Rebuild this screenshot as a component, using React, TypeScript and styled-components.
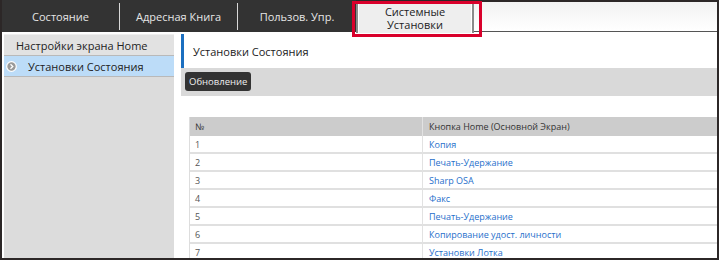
import React from "react";
import styled, { createGlobalStyle } from "styled-components";

const Global = createGlobalStyle`
  html, body { margin: 0; padding: 0; background: #fff; }
  body { font-family: "Open Sans", "Noto Sans", sans-serif; }
  * { box-sizing: border-box; }
`;

const Frame = styled.div`
  width: 719px;
  height: 260px;
  border: 2px solid #2c2727;
  border-top-width: 0;
  display: flex;
  flex-direction: column;
  overflow: hidden;
  position: relative;
`;

const Nav = styled.div`
  display: flex;
  flex-shrink: 0;
  height: 32px;
  background: linear-gradient(#f2f2f2, #fff);
  border-top: 2px solid #2c2727;
  border-bottom: 1px solid #555;
`;

const DarkTabs = styled.div`
  display: flex;
  background: #333;
  margin-top: -2px;
  height: 32px;
`;

const Tab = styled.div<{ $sep?: boolean }>`
  width: 118px;
  display: flex;
  align-items: center;
  justify-content: center;
  color: #e6e6e6;
  font-size: 11px;
  border-right: ${(p) => (p.$sep ? "1px solid #d8d8d8" : "none")};
  margin: 3px 0 2px;
  height: 27px;
`;

const ActiveTab = styled.div`
  width: 118px;
  height: 29px;
  margin-top: 2px;
  background: #eeeeee;
  border-left: 2px solid #8a8a8a;
  border-right: 2px solid #8a8a8a;
  box-shadow: inset 1px 0 0 #fff, inset -1px 0 0 #fff;
  color: #222;
  font-size: 11px;
  text-align: center;
  display: flex;
  flex-direction: column;
  align-items: center;
  justify-content: center;
  position: relative;
  z-index: 1;
`;

const TabLine = styled.span`
  display: block;
  line-height: 12.5px;
`;

const Highlight = styled.div`
  position: absolute;
  left: 350px;
  top: 1px;
  width: 130px;
  height: 36px;
  border: 3px solid #d9002b;
  z-index: 2;
  pointer-events: none;
`;

const Body = styled.div`
  flex: 1;
  display: flex;
  gap: 7px;
  padding: 2px 0 0 2px;
  min-height: 0;
`;

const Sidebar = styled.div`
  width: 170px;
  flex-shrink: 0;
  background: #dcdcdc;
  display: flex;
  flex-direction: column;
`;

const SideItem = styled.div<{ $active?: boolean }>`
  height: ${(p) => (p.$active ? "21px" : "22px")};
  display: flex;
  align-items: center;
  gap: 11px;
  padding-left: ${(p) => (p.$active ? "2px" : "12px")};
  font-size: 11px;
  color: #222;
  background: ${(p) => (p.$active ? "#bcdcf8" : "#e2e2e2")};
  border-top: ${(p) => (p.$active ? "none" : "1px solid #efefef")};
  border-bottom: 1px solid #b9b9b9;
`;

const Main = styled.div`
  flex: 1;
  display: flex;
  flex-direction: column;
  min-width: 0;
`;

const Title = styled.div`
  height: 34px;
  flex-shrink: 0;
  border-left: 3px solid #1b6fc0;
  padding-left: 9px;
  display: flex;
  align-items: center;
  font-size: 11px;
  color: #222;
`;

const Toolbar = styled.div`
  height: 28px;
  flex-shrink: 0;
  background: #d9d9d9;
  padding: 4px 0 0 4px;
  display: flex;
  align-items: flex-start;
`;

const Button = styled.div`
  height: 19px;
  padding: 0 4px;
  background: #333;
  color: #eee;
  border-radius: 3px;
  font-size: 9.5px;
  display: flex;
  align-items: center;
`;

const Table = styled.div`
  margin: 21px 0 0 8px;
  display: grid;
  grid-template-columns: 232px 1fr;
  border-left: 1px solid #ddd;
  font-size: 9px;
`;

const HeadCell = styled.div<{ $first?: boolean }>`
  height: 19px;
  background: #cccccc;
  color: #333;
  display: flex;
  align-items: center;
  padding-left: ${(p) => (p.$first ? "5px" : "6px")};
  border-left: ${(p) => (p.$first ? "none" : "1px solid #e2e2e2")};
`;

const Cell = styled.div<{ $link?: boolean; $first?: boolean }>`
  height: 18px;
  display: flex;
  align-items: center;
  padding-left: ${(p) => (p.$first ? "5px" : "6px")};
  color: ${(p) => (p.$link ? "#1f6fcb" : "#555")};
  border-bottom: 2px solid #e0e0e0;
  border-left: ${(p) => (p.$first ? "none" : "1px solid #e2e2e2")};
  background: #fff;
`;

const Icon = () => (
  <svg width="11" height="11" viewBox="0 0 11 11">
    <circle cx="5.5" cy="5.5" r="4.8" fill="#9a9a9a" stroke="#fff" strokeWidth="1.2" />
    <path d="M4.5 3.3 L6.8 5.5 L4.5 7.7" fill="none" stroke="#fff" strokeWidth="1.3" />
  </svg>
);

const rows = [
  "Копия",
  "Печать-Удержание",
  "Sharp OSA",
  "Факс",
  "Печать-Удержание",
  "Копирование удост. личности",
  "Установки Лотка",
];

export default function App() {
  return (
    <>
      <Global />
      <Frame>
        <Nav>
          <DarkTabs>
            <Tab $sep>Состояние</Tab>
            <Tab $sep>Адресная Книга</Tab>
            <Tab>Пользов. Упр.</Tab>
          </DarkTabs>
          <ActiveTab>
            <TabLine>Системные</TabLine>
            <TabLine>Установки</TabLine>
          </ActiveTab>
        </Nav>
        <Highlight />
        <Body>
          <Sidebar>
            <SideItem>Настройки экрана Home</SideItem>
            <SideItem $active>
              <Icon />
              Установки Состояния
            </SideItem>
          </Sidebar>
          <Main>
            <Title>Установки Состояния</Title>
            <Toolbar>
              <Button>Обновление</Button>
            </Toolbar>
            <Table>
              <HeadCell $first>№</HeadCell>
              <HeadCell>Кнопка Home (Основной Экран)</HeadCell>
              {rows.map((r, i) => (
                <React.Fragment key={i}>
                  <Cell $first>{i + 1}</Cell>
                  <Cell $link>{r}</Cell>
                </React.Fragment>
              ))}
            </Table>
          </Main>
        </Body>
      </Frame>
    </>
  );
}
